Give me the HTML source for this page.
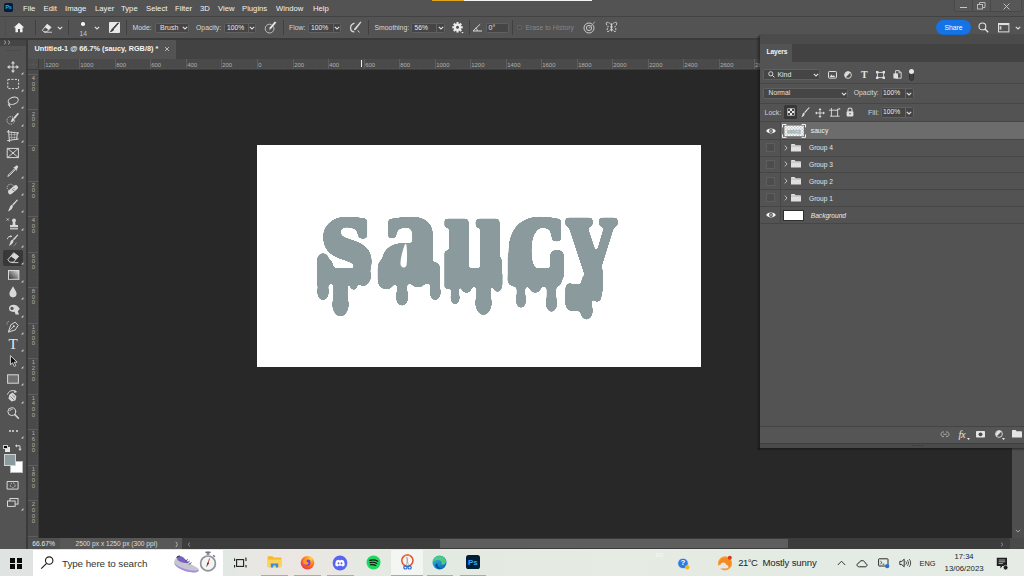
<!DOCTYPE html>
<html><head><meta charset="utf-8"><title>Untitled-1 @ 66.7% (saucy, RGB/8)</title>
<style>
*{box-sizing:border-box;margin:0;padding:0}
html,body{width:1024px;height:576px;overflow:hidden;background:#282828}
body{font-family:"Liberation Sans",sans-serif;position:relative}
.abs{position:absolute}
.t{position:absolute;white-space:nowrap}
.bx{position:absolute;background:#454545;border:1px solid #606060;border-radius:1.5px}
svg{overflow:visible}
</style></head><body>
<div class="abs" style="left:0px;top:0px;width:1024px;height:16px;background:#535353;"></div>
<div class="abs" style="left:0px;top:16px;width:1024px;height:1px;background:#434343;"></div>
<div class="abs" style="left:0px;top:17px;width:1024px;height:21px;background:#535353;"></div>
<div class="abs" style="left:0px;top:38px;width:1024px;height:2px;background:#3a3a3a;"></div>
<div class="abs" style="left:28px;top:40px;width:996px;height:19px;background:#424242;"></div>
<div class="abs" style="left:28px;top:40px;width:148px;height:19px;background:#535353;"></div>
<div class="abs" style="left:0px;top:40px;width:26px;height:509px;background:#535353;"></div>
<div class="abs" style="left:0px;top:40px;width:26px;height:6px;background:#454545;"></div>
<div class="abs" style="left:26px;top:40px;width:2px;height:509px;background:#3a3a3a;"></div>
<div class="abs" style="left:28px;top:59px;width:996px;height:11px;background:#4a4a4a;"></div>
<div class="abs" style="left:28px;top:70px;width:11px;height:468px;background:#4a4a4a;"></div>
<div class="abs" style="left:39px;top:70px;width:985px;height:468px;background:#282828;"></div>
<div class="abs" style="left:257px;top:145px;width:444px;height:222px;background:#ffffff;"></div>
<svg id="art" class="abs" style="left:257px;top:145px" width="444" height="222" viewBox="257 145 444 222">
<defs><filter id="goo" x="-5%" y="-5%" width="110%" height="110%" color-interpolation-filters="sRGB"><feGaussianBlur in="SourceGraphic" stdDeviation="1.5" result="b"/><feColorMatrix in="b" mode="matrix" values="0 0 0 0 0.545  0 0 0 0 0.604  0 0 0 0 0.612  0 0 0 14 -6.8"/></filter></defs>
<g fill="#8b9a9c" stroke="#8b9a9c" filter="url(#goo)">
<text y="281" font-family="'Liberation Serif',serif" font-weight="bold" font-size="131" stroke-width="5" stroke-linejoin="round"><tspan x="321.5" textLength="51" lengthAdjust="spacingAndGlyphs">s</tspan><tspan x="380" textLength="58" lengthAdjust="spacingAndGlyphs">a</tspan><tspan x="444.5" textLength="61" lengthAdjust="spacingAndGlyphs">u</tspan><tspan x="506.5" textLength="57" lengthAdjust="spacingAndGlyphs">c</tspan><tspan x="566" textLength="51" lengthAdjust="spacingAndGlyphs">y</tspan></text>
<g stroke="none">
<rect x="317.0" y="253.0" width="12.0" height="37.0" rx="6.0"/>
<rect x="317.8" y="270.0" width="10.4" height="25.3" rx="5.2"/><ellipse cx="323.0" cy="291.8" rx="6.0" ry="8.7"/>
<rect x="333.3" y="270.0" width="14.4" height="39.1" rx="7.2"/><ellipse cx="340.5" cy="304.2" rx="8.5" ry="12.3"/>
<rect x="350.0" y="270.0" width="7.5" height="20.0" rx="3.8"/>
<rect x="358.0" y="266.0" width="10.6" height="20.4" rx="5.3"/>
<rect x="322.0" y="268.0" width="49.0" height="16.0" rx="6.0"/>
<rect x="377.5" y="258.0" width="17.5" height="31.6" rx="8.8"/>
<rect x="396.9" y="270.0" width="10.4" height="30.3" rx="5.2"/><ellipse cx="402.1" cy="296.6" rx="6.5" ry="9.4"/>
<rect x="409.0" y="270.0" width="18.0" height="17.5" rx="9.0"/>
<rect x="430.5" y="262.0" width="9.5" height="33.4" rx="4.8"/><ellipse cx="435.2" cy="292.1" rx="5.8" ry="8.3"/>
<rect x="379.0" y="266.0" width="61.0" height="18.0" rx="6.0"/>
<rect x="402.0" y="250.0" width="12.0" height="18.0" rx="2.0"/>
<rect x="444.0" y="250.0" width="8.0" height="39.5" rx="4.0"/>
<rect x="451.3" y="270.0" width="7.7" height="30.4" rx="3.8"/><ellipse cx="455.1" cy="297.6" rx="4.8" ry="7.0"/>
<rect x="461.0" y="270.0" width="11.0" height="23.0" rx="5.5"/>
<rect x="476.3" y="270.0" width="14.4" height="37.6" rx="7.2"/><ellipse cx="483.5" cy="302.7" rx="8.5" ry="12.3"/>
<rect x="493.0" y="256.0" width="9.0" height="36.0" rx="4.5"/>
<rect x="445.0" y="268.0" width="56.0" height="19.0" rx="6.0"/>
<rect x="507.5" y="252.0" width="8.5" height="33.5" rx="4.2"/>
<rect x="516.5" y="270.0" width="8.9" height="33.3" rx="4.4"/><ellipse cx="521.0" cy="300.1" rx="5.4" ry="7.9"/>
<rect x="529.0" y="270.0" width="12.5" height="23.0" rx="6.2"/>
<rect x="546.5" y="270.0" width="9.9" height="36.8" rx="4.9"/><ellipse cx="551.5" cy="303.4" rx="5.9" ry="8.6"/>
<rect x="550.0" y="250.0" width="14.0" height="31.0" rx="5.0"/>
<rect x="509.0" y="268.0" width="53.0" height="19.0" rx="6.0"/>
<rect x="565.3" y="283.0" width="8.9" height="21.4" rx="4.5"/><ellipse cx="569.8" cy="301.4" rx="5.2" ry="7.6"/>
<rect x="581.3" y="275.0" width="10.4" height="39.3" rx="5.2"/><ellipse cx="586.5" cy="310.6" rx="6.5" ry="9.4"/>
<rect x="592.5" y="272.0" width="9.0" height="30.0" rx="4.5"/>
<rect x="566.0" y="284.0" width="36.0" height="15.0" rx="5.0"/>
<rect x="584.0" y="266.0" width="19.0" height="29.0" rx="5.0"/>
</g>
</g>
<path d="M404.8 244.6C403 250 400.3 258 400.5 264C400.7 268.4 406.2 268.8 406.7 264.4C407.2 258 407.2 250 406.5 245C406.3 243.8 405.2 243.6 404.8 244.6Z" fill="#ffffff"/>
<rect x="441.4" y="205" width="2.8" height="97" rx="1" fill="#ffffff"/>
<rect x="502.6" y="205" width="4.6" height="92" rx="1.5" fill="#ffffff"/>
</svg>
<div class="abs" style="left:4.2px;top:3.4px;width:9.2px;height:8.8px;background:#001e36;border-radius:1.8px"></div>
<div class="t " style="left:5.4px;top:4.4px;font-size:5.4px;line-height:7.4px;color:#31a8ff;font-weight:bold;letter-spacing:-0.2px">Ps</div>
<div class="t " style="left:23px;top:3.8px;font-size:7.7px;line-height:9.7px;color:#f2f2f2;">File</div>
<div class="t " style="left:43.6px;top:3.8px;font-size:7.7px;line-height:9.7px;color:#f2f2f2;">Edit</div>
<div class="t " style="left:65px;top:3.8px;font-size:7.7px;line-height:9.7px;color:#f2f2f2;">Image</div>
<div class="t " style="left:95px;top:3.8px;font-size:7.7px;line-height:9.7px;color:#f2f2f2;">Layer</div>
<div class="t " style="left:121px;top:3.8px;font-size:7.7px;line-height:9.7px;color:#f2f2f2;">Type</div>
<div class="t " style="left:146px;top:3.8px;font-size:7.7px;line-height:9.7px;color:#f2f2f2;">Select</div>
<div class="t " style="left:175px;top:3.8px;font-size:7.7px;line-height:9.7px;color:#f2f2f2;">Filter</div>
<div class="t " style="left:200px;top:3.8px;font-size:7.7px;line-height:9.7px;color:#f2f2f2;">3D</div>
<div class="t " style="left:218px;top:3.8px;font-size:7.7px;line-height:9.7px;color:#f2f2f2;">View</div>
<div class="t " style="left:242px;top:3.8px;font-size:7.7px;line-height:9.7px;color:#f2f2f2;">Plugins</div>
<div class="t " style="left:276px;top:3.8px;font-size:7.7px;line-height:9.7px;color:#f2f2f2;">Window</div>
<div class="t " style="left:313px;top:3.8px;font-size:7.7px;line-height:9.7px;color:#f2f2f2;">Help</div>
<div class="abs" style="left:432px;top:0px;width:32px;height:1.4px;background:#e0a418;"></div>
<div class="abs" style="left:464px;top:0px;width:128px;height:1.4px;background:#f2f2f2;"></div>
<div class="abs" style="left:953.5px;top:-1px;width:68.5px;height:13px;background:#575757;border:1px solid #484848;border-radius:0 0 2px 2px"></div>
<div class="abs" style="left:972px;top:0px;width:1px;height:12px;background:#484848;"></div>
<div class="abs" style="left:990px;top:0px;width:1px;height:12px;background:#484848;"></div>
<div class="abs" style="left:959.5px;top:7.2px;width:7px;height:1.3px;background:#c8c8c8;"></div>
<svg class="abs" style="left:977px;top:2.4px;" width="9" height="8" viewBox="0 0 9 8"><rect x="0.5" y="2.5" width="5" height="4.5" fill="none" stroke="#b8b8b8" stroke-width="1"/><path d="M2.5 2.5V0.5H8V5.5H5.5" fill="none" stroke="#b8b8b8" stroke-width="1"/></svg>
<svg class="abs" style="left:1003px;top:3px;" width="7" height="7" viewBox="0 0 7 7"><path d="M0.6 0.6L6.4 6.4M6.4 0.6L0.6 6.4" stroke="#cacaca" stroke-width="0.9"/></svg>
<div class="abs" style="left:4.5px;top:20px;width:1px;height:1px;background:#474747;"></div>
<div class="abs" style="left:4.5px;top:22px;width:1px;height:1px;background:#474747;"></div>
<div class="abs" style="left:4.5px;top:24px;width:1px;height:1px;background:#474747;"></div>
<div class="abs" style="left:4.5px;top:26px;width:1px;height:1px;background:#474747;"></div>
<div class="abs" style="left:4.5px;top:28px;width:1px;height:1px;background:#474747;"></div>
<div class="abs" style="left:4.5px;top:30px;width:1px;height:1px;background:#474747;"></div>
<div class="abs" style="left:4.5px;top:32px;width:1px;height:1px;background:#474747;"></div>
<div class="abs" style="left:4.5px;top:34px;width:1px;height:1px;background:#474747;"></div>
<svg class="abs" style="left:13px;top:22.2px;" width="12" height="11" viewBox="0 0 14 13"><path d="M7 1L0.8 6.6H2.8V12H5.8V8.4H8.2V12H11.2V6.6H13.2Z" fill="#f0f0f0"/></svg>
<div class="abs" style="left:35px;top:20px;width:1px;height:15px;background:#404040;"></div>
<svg class="abs" style="left:41px;top:23px;" width="11.4" height="10.2" viewBox="0 0 14 12.6"><path d="M7.6 1.6L12.4 5.4L7 11H3.6L1.6 9Z" fill="none" stroke="#e8e8e8" stroke-width="1.1" stroke-linejoin="round"/><path d="M7.6 1.6L12.4 5.4L9.4 8.6L4.6 4.8Z" fill="#e8e8e8"/><path d="M4 11.4H13.6" stroke="#e8e8e8" stroke-width="1"/></svg>
<svg class="abs" style="left:57px;top:26px;" width="6" height="4" viewBox="0 0 6 4"><path d="M0.8 0.8 L3 3 L5.2 0.8" fill="none" stroke="#dedede" stroke-width="1.1"/></svg>
<div class="abs" style="left:68px;top:20px;width:1px;height:15px;background:#404040;"></div>
<div class="abs" style="left:81.3px;top:22px;width:3.6px;height:3.6px;border-radius:50%;background:#f4f4f4"></div>
<div class="t " style="left:79.5px;top:29.5px;font-size:6.6px;line-height:8.6px;color:#c8c8c8;">14</div>
<svg class="abs" style="left:93.5px;top:26px;" width="6" height="4" viewBox="0 0 6 4"><path d="M0.8 0.8 L3 3 L5.2 0.8" fill="none" stroke="#dedede" stroke-width="1.1"/></svg>
<div class="abs" style="left:109px;top:22px;width:11px;height:11px;background:#e8e8e8;border-radius:1px"></div>
<svg class="abs" style="left:109px;top:22px;" width="11" height="11" viewBox="0 0 11 11"><path d="M9.6 1.2L5 6.6L4.2 6L8.8 0.9Z M3.8 6.4L4.7 7.2C4.4 8.6 3 9.6 1.4 9.6C2.6 8.8 2.4 7 3.8 6.4Z" fill="#3a3a3a" stroke="#3a3a3a" stroke-width="0.9" stroke-linejoin="round"/></svg>
<div class="abs" style="left:126px;top:20px;width:1px;height:15px;background:#404040;"></div>
<div class="t " style="left:132.5px;top:24.2px;font-size:6.9px;line-height:8.9px;color:#d8d8d8;">Mode:</div>
<div class="bx" style="left:154.8px;top:22.6px;width:34px;height:10.4px;"></div>
<div class="t " style="left:160px;top:23px;font-size:7px;line-height:9px;color:#e4e4e4;">Brush</div>
<svg class="abs" style="left:182px;top:26px;" width="6" height="4" viewBox="0 0 6 4"><path d="M0.8 0.8 L3 3 L5.2 0.8" fill="none" stroke="#dedede" stroke-width="1.1"/></svg>
<div class="t " style="left:196px;top:24.2px;font-size:6.85px;line-height:8.85px;color:#d8d8d8;">Opacity:</div>
<div class="bx" style="left:223.6px;top:22.6px;width:32.6px;height:10.4px;"></div>
<div class="t " style="left:227px;top:24.2px;font-size:6.7px;line-height:8.7px;color:#ececec;">100%</div>
<div class="abs" style="left:248px;top:23.4px;width:1px;height:8.8px;background:#606060;"></div>
<svg class="abs" style="left:249.4px;top:26px;" width="6" height="4" viewBox="0 0 6 4"><path d="M0.8 0.8 L3 3 L5.2 0.8" fill="none" stroke="#dedede" stroke-width="1.1"/></svg>
<svg class="abs" style="left:264px;top:21px;" width="13" height="13" viewBox="0 0 13 13"><circle cx="5.6" cy="7.6" r="4.4" fill="none" stroke="#c2c2c2" stroke-width="0.95"/><path d="M12.6 1.6L7.2 8L4.8 9.2L5.4 6.6L10.8 0.2Z" fill="#efefef" stroke="#535353" stroke-width="0.6"/></svg>
<div class="abs" style="left:283px;top:20px;width:1px;height:15px;background:#404040;"></div>
<div class="t " style="left:289px;top:24.2px;font-size:6.9px;line-height:8.9px;color:#d8d8d8;">Flow:</div>
<div class="bx" style="left:308px;top:22.6px;width:33px;height:10.4px;"></div>
<div class="t " style="left:311px;top:24.2px;font-size:6.7px;line-height:8.7px;color:#ececec;">100%</div>
<div class="abs" style="left:333.4px;top:23.4px;width:1px;height:8.8px;background:#606060;"></div>
<svg class="abs" style="left:334.4px;top:26px;" width="6" height="4" viewBox="0 0 6 4"><path d="M0.8 0.8 L3 3 L5.2 0.8" fill="none" stroke="#dedede" stroke-width="1.1"/></svg>
<svg class="abs" style="left:349px;top:21px;" width="14" height="13" viewBox="0 0 14 13"><path d="M5.5 2.2C2.8 3 1.4 5 1.6 7.4C1.8 9.4 3.2 10.8 5.4 11" fill="none" stroke="#dcdcdc" stroke-width="1.25"/><path d="M12.4 1.2L7.8 7.6C7.2 8.8 6 9.4 4.6 9.2C5.4 8.4 5 7.4 6.2 6.6L11.4 0.6Z" fill="#d8d8d8"/><path d="M8.8 9.4L10.4 11.4" stroke="#d8d8d8" stroke-width="1"/></svg>
<div class="abs" style="left:368px;top:20px;width:1px;height:15px;background:#404040;"></div>
<div class="t " style="left:374.5px;top:24.2px;font-size:6.85px;line-height:8.85px;color:#d8d8d8;">Smoothing:</div>
<div class="bx" style="left:411px;top:22.6px;width:34px;height:10.4px;"></div>
<div class="t " style="left:414.5px;top:24.2px;font-size:6.7px;line-height:8.7px;color:#ececec;">56%</div>
<div class="abs" style="left:435.6px;top:23.4px;width:1px;height:8.8px;background:#606060;"></div>
<svg class="abs" style="left:437.5px;top:26px;" width="6" height="4" viewBox="0 0 6 4"><path d="M0.8 0.8 L3 3 L5.2 0.8" fill="none" stroke="#dedede" stroke-width="1.1"/></svg>
<svg class="abs" style="left:451px;top:21px;" width="13" height="13" viewBox="0 0 13 13"><g transform="translate(6.5 6.3)"><rect x="-1.1" y="-5.2" width="2.2" height="2.6" transform="rotate(0)" fill="#ececec"/><rect x="-1.1" y="-5.2" width="2.2" height="2.6" transform="rotate(45)" fill="#ececec"/><rect x="-1.1" y="-5.2" width="2.2" height="2.6" transform="rotate(90)" fill="#ececec"/><rect x="-1.1" y="-5.2" width="2.2" height="2.6" transform="rotate(135)" fill="#ececec"/><rect x="-1.1" y="-5.2" width="2.2" height="2.6" transform="rotate(180)" fill="#ececec"/><rect x="-1.1" y="-5.2" width="2.2" height="2.6" transform="rotate(225)" fill="#ececec"/><rect x="-1.1" y="-5.2" width="2.2" height="2.6" transform="rotate(270)" fill="#ececec"/><rect x="-1.1" y="-5.2" width="2.2" height="2.6" transform="rotate(315)" fill="#ececec"/><circle r="3.5" fill="#ececec"/><circle r="1.5" fill="#535353"/></g><path d="M10.4 11L12.6 11L11.5 12.4Z" fill="#ececec"/></svg>
<div class="abs" style="left:469px;top:20px;width:1px;height:15px;background:#404040;"></div>
<svg class="abs" style="left:472px;top:23px;" width="11" height="9" viewBox="0 0 11 9"><path d="M10 8H1L8.2 1.2" fill="none" stroke="#d8d8d8" stroke-width="1"/><path d="M5.2 8C5.2 6.4 4.6 5.4 3.8 4.8" fill="none" stroke="#d8d8d8" stroke-width="0.9"/></svg>
<div class="bx" style="left:486px;top:22.6px;width:23px;height:10.4px;"></div>
<div class="t " style="left:488.5px;top:23.2px;font-size:7px;line-height:9px;color:#e8e8e8;">0°</div>
<div class="abs" style="left:512px;top:20px;width:1px;height:15px;background:#404040;"></div>
<div class="abs" style="left:517px;top:25px;width:5px;height:5px;border:0.8px solid #626262;border-radius:1px;background:#4e4e4e"></div>
<div class="t " style="left:525.5px;top:24.2px;font-size:6.8px;line-height:8.8px;color:#868686;">Erase to History</div>
<svg class="abs" style="left:583px;top:21px;" width="13" height="13" viewBox="0 0 13 13"><circle cx="6" cy="7" r="5" fill="none" stroke="#d8d8d8" stroke-width="0.9"/><circle cx="6" cy="7" r="2.6" fill="none" stroke="#d8d8d8" stroke-width="0.9"/><path d="M12.4 0.8L6.6 7.2L5.4 7.8L5.9 6.5L11.6 0.4Z" fill="#d8d8d8" stroke="#535353" stroke-width="0.5"/></svg>
<svg class="abs" style="left:605px;top:21px;" width="13" height="13" viewBox="0 0 13 13"><path d="M6 3.4C4.6 1.6 2.4 1 1 1.6C1.4 3.6 2 5 3.4 6C2 6.8 1.8 8.6 2.6 10.6C4 10.6 5.4 9.6 6 8Z M7 3.4C8.4 1.6 10.6 1 12 1.6C11.6 3.6 11 5 9.6 6C11 6.8 11.2 8.6 10.4 10.6C9 10.6 7.6 9.6 7 8Z" fill="none" stroke="#d8d8d8" stroke-width="0.9" stroke-linejoin="round" stroke-dasharray="2.2 0.8"/><path d="M6.5 2.4V10.4" stroke="#d8d8d8" stroke-width="0.9"/></svg>
<div class="abs" style="left:936px;top:20px;width:35px;height:15px;border-radius:8px;background:#1473e6"></div>
<div class="t " style="left:944.5px;top:23.5px;font-size:6.8px;line-height:8.8px;color:#ffffff;">Share</div>
<svg class="abs" style="left:978px;top:22px;" width="11" height="11" viewBox="0 0 11 11"><circle cx="4.4" cy="4.4" r="3.4" fill="none" stroke="#e6e6e6" stroke-width="1.1"/><path d="M7 7L10.2 10.2" stroke="#e6e6e6" stroke-width="1.3"/></svg>
<svg class="abs" style="left:998px;top:23px;" width="11.4" height="9.4" viewBox="0 0 11.4 9.4"><rect x="0.5" y="0.5" width="10.4" height="8.4" fill="none" stroke="#e0e0e0" stroke-width="1"/><rect x="0.5" y="0.5" width="10.4" height="1.6" fill="#e0e0e0"/><rect x="1.6" y="3.2" width="1.8" height="3.4" fill="#cfcfcf"/></svg>
<svg class="abs" style="left:1015px;top:26px;" width="6" height="4" viewBox="0 0 6 4"><path d="M0.8 0.8 L3 3 L5.2 0.8" fill="none" stroke="#e0e0e0" stroke-width="1.1"/></svg>
<div class="t " style="left:34.5px;top:44px;font-size:7.3px;line-height:9.3px;color:#f4f4f4;font-weight:bold">Untitled-1 @ 66.7% (saucy, RGB/8) *</div>
<svg class="abs" style="left:164px;top:46px;" width="6" height="6" viewBox="0 0 6 6"><path d="M1 1L5 5M5 1L1 5" stroke="#c4c4c4" stroke-width="0.9"/></svg>
<svg class="abs" style="left:2.6px;top:40.4px;" width="9" height="5" viewBox="0 0 9 5"><path d="M1 0.6L3 2.5L1 4.4M5 0.6L7 2.5L5 4.4" fill="none" stroke="#bdbdbd" stroke-width="0.8"/></svg>
<div class="abs" style="left:7px;top:50px;width:1px;height:1px;background:#444;"></div>
<div class="abs" style="left:9px;top:50px;width:1px;height:1px;background:#444;"></div>
<div class="abs" style="left:11px;top:50px;width:1px;height:1px;background:#444;"></div>
<div class="abs" style="left:13px;top:50px;width:1px;height:1px;background:#444;"></div>
<div class="abs" style="left:15px;top:50px;width:1px;height:1px;background:#444;"></div>
<div class="abs" style="left:17px;top:50px;width:1px;height:1px;background:#444;"></div>
<div class="abs" style="left:19px;top:50px;width:1px;height:1px;background:#444;"></div>
<div class="abs" style="left:28px;top:69px;width:996px;height:1px;background:#3c3c3c;"></div>
<div class="abs" style="left:38px;top:59px;width:1px;height:479px;background:#3c3c3c;"></div>
<div class="abs" style="left:39px;top:67.5px;width:985px;height:1.5px;background:repeating-linear-gradient(90deg,#585858 0,#585858 1px,rgba(0,0,0,0) 1px,rgba(0,0,0,0) 3.552px);background-position:1.33px 0"></div>
<div class="abs" style="left:36.5px;top:70px;width:1.5px;height:468px;background:repeating-linear-gradient(180deg,#585858 0,#585858 1px,rgba(0,0,0,0) 1px,rgba(0,0,0,0) 3.552px);background-position:0 0.41px"></div>
<div class="abs" style="left:44px;top:59px;width:1px;height:10px;background:#5e5e5e;"></div>
<div class="t " style="left:45.3px;top:62.4px;font-size:5.9px;line-height:7.9px;color:#b0b0b0;">1200</div>
<div class="abs" style="left:79px;top:59px;width:1px;height:10px;background:#5e5e5e;"></div>
<div class="t " style="left:80.3px;top:62.4px;font-size:5.9px;line-height:7.9px;color:#b0b0b0;">1000</div>
<div class="abs" style="left:115px;top:59px;width:1px;height:10px;background:#5e5e5e;"></div>
<div class="t " style="left:116.3px;top:62.4px;font-size:5.9px;line-height:7.9px;color:#b0b0b0;">800</div>
<div class="abs" style="left:150px;top:59px;width:1px;height:10px;background:#5e5e5e;"></div>
<div class="t " style="left:151.3px;top:62.4px;font-size:5.9px;line-height:7.9px;color:#b0b0b0;">600</div>
<div class="abs" style="left:186px;top:59px;width:1px;height:10px;background:#5e5e5e;"></div>
<div class="t " style="left:187.3px;top:62.4px;font-size:5.9px;line-height:7.9px;color:#b0b0b0;">400</div>
<div class="abs" style="left:221px;top:59px;width:1px;height:10px;background:#5e5e5e;"></div>
<div class="t " style="left:222.3px;top:62.4px;font-size:5.9px;line-height:7.9px;color:#b0b0b0;">200</div>
<div class="abs" style="left:257px;top:59px;width:1px;height:10px;background:#5e5e5e;"></div>
<div class="t " style="left:258.3px;top:62.4px;font-size:5.9px;line-height:7.9px;color:#b0b0b0;">0</div>
<div class="abs" style="left:293px;top:59px;width:1px;height:10px;background:#5e5e5e;"></div>
<div class="t " style="left:294.3px;top:62.4px;font-size:5.9px;line-height:7.9px;color:#b0b0b0;">200</div>
<div class="abs" style="left:328px;top:59px;width:1px;height:10px;background:#5e5e5e;"></div>
<div class="t " style="left:329.3px;top:62.4px;font-size:5.9px;line-height:7.9px;color:#b0b0b0;">400</div>
<div class="abs" style="left:364px;top:59px;width:1px;height:10px;background:#5e5e5e;"></div>
<div class="t " style="left:365.3px;top:62.4px;font-size:5.9px;line-height:7.9px;color:#b0b0b0;">600</div>
<div class="abs" style="left:399px;top:59px;width:1px;height:10px;background:#5e5e5e;"></div>
<div class="t " style="left:400.3px;top:62.4px;font-size:5.9px;line-height:7.9px;color:#b0b0b0;">800</div>
<div class="abs" style="left:435px;top:59px;width:1px;height:10px;background:#5e5e5e;"></div>
<div class="t " style="left:436.3px;top:62.4px;font-size:5.9px;line-height:7.9px;color:#b0b0b0;">1000</div>
<div class="abs" style="left:470px;top:59px;width:1px;height:10px;background:#5e5e5e;"></div>
<div class="t " style="left:471.3px;top:62.4px;font-size:5.9px;line-height:7.9px;color:#b0b0b0;">1200</div>
<div class="abs" style="left:506px;top:59px;width:1px;height:10px;background:#5e5e5e;"></div>
<div class="t " style="left:507.3px;top:62.4px;font-size:5.9px;line-height:7.9px;color:#b0b0b0;">1400</div>
<div class="abs" style="left:541px;top:59px;width:1px;height:10px;background:#5e5e5e;"></div>
<div class="t " style="left:542.3px;top:62.4px;font-size:5.9px;line-height:7.9px;color:#b0b0b0;">1600</div>
<div class="abs" style="left:577px;top:59px;width:1px;height:10px;background:#5e5e5e;"></div>
<div class="t " style="left:578.3px;top:62.4px;font-size:5.9px;line-height:7.9px;color:#b0b0b0;">1800</div>
<div class="abs" style="left:612px;top:59px;width:1px;height:10px;background:#5e5e5e;"></div>
<div class="t " style="left:613.3px;top:62.4px;font-size:5.9px;line-height:7.9px;color:#b0b0b0;">2000</div>
<div class="abs" style="left:648px;top:59px;width:1px;height:10px;background:#5e5e5e;"></div>
<div class="t " style="left:649.3px;top:62.4px;font-size:5.9px;line-height:7.9px;color:#b0b0b0;">2200</div>
<div class="abs" style="left:683px;top:59px;width:1px;height:10px;background:#5e5e5e;"></div>
<div class="t " style="left:684.3px;top:62.4px;font-size:5.9px;line-height:7.9px;color:#b0b0b0;">2400</div>
<div class="abs" style="left:719px;top:59px;width:1px;height:10px;background:#5e5e5e;"></div>
<div class="t " style="left:720.3px;top:62.4px;font-size:5.9px;line-height:7.9px;color:#b0b0b0;">2600</div>
<div class="abs" style="left:754px;top:59px;width:1px;height:10px;background:#5e5e5e;"></div>
<div class="t " style="left:755.3px;top:62.4px;font-size:5.9px;line-height:7.9px;color:#b0b0b0;">2800</div>
<div class="abs" style="left:790px;top:59px;width:1px;height:10px;background:#5e5e5e;"></div>
<div class="t " style="left:791.3px;top:62.4px;font-size:5.9px;line-height:7.9px;color:#b0b0b0;">3000</div>
<div class="abs" style="left:28px;top:74px;width:10px;height:1px;background:#5e5e5e;"></div>
<div class="t " style="left:31.8px;top:75.2px;font-size:5.9px;line-height:7.9px;color:#b0b0b0;">4</div>
<div class="t " style="left:31.8px;top:80.7px;font-size:5.9px;line-height:7.9px;color:#b0b0b0;">0</div>
<div class="t " style="left:31.8px;top:86.3px;font-size:5.9px;line-height:7.9px;color:#b0b0b0;">0</div>
<div class="abs" style="left:28px;top:109px;width:10px;height:1px;background:#5e5e5e;"></div>
<div class="t " style="left:31.8px;top:110.7px;font-size:5.9px;line-height:7.9px;color:#b0b0b0;">2</div>
<div class="t " style="left:31.8px;top:116.2px;font-size:5.9px;line-height:7.9px;color:#b0b0b0;">0</div>
<div class="t " style="left:31.8px;top:121.8px;font-size:5.9px;line-height:7.9px;color:#b0b0b0;">0</div>
<div class="abs" style="left:28px;top:145px;width:10px;height:1px;background:#5e5e5e;"></div>
<div class="t " style="left:31.8px;top:146.2px;font-size:5.9px;line-height:7.9px;color:#b0b0b0;">0</div>
<div class="abs" style="left:28px;top:181px;width:10px;height:1px;background:#5e5e5e;"></div>
<div class="t " style="left:31.8px;top:181.7px;font-size:5.9px;line-height:7.9px;color:#b0b0b0;">2</div>
<div class="t " style="left:31.8px;top:187.3px;font-size:5.9px;line-height:7.9px;color:#b0b0b0;">0</div>
<div class="t " style="left:31.8px;top:192.8px;font-size:5.9px;line-height:7.9px;color:#b0b0b0;">0</div>
<div class="abs" style="left:28px;top:216px;width:10px;height:1px;background:#5e5e5e;"></div>
<div class="t " style="left:31.8px;top:217.2px;font-size:5.9px;line-height:7.9px;color:#b0b0b0;">4</div>
<div class="t " style="left:31.8px;top:222.8px;font-size:5.9px;line-height:7.9px;color:#b0b0b0;">0</div>
<div class="t " style="left:31.8px;top:228.3px;font-size:5.9px;line-height:7.9px;color:#b0b0b0;">0</div>
<div class="abs" style="left:28px;top:252px;width:10px;height:1px;background:#5e5e5e;"></div>
<div class="t " style="left:31.8px;top:252.8px;font-size:5.9px;line-height:7.9px;color:#b0b0b0;">6</div>
<div class="t " style="left:31.8px;top:258.3px;font-size:5.9px;line-height:7.9px;color:#b0b0b0;">0</div>
<div class="t " style="left:31.8px;top:263.9px;font-size:5.9px;line-height:7.9px;color:#b0b0b0;">0</div>
<div class="abs" style="left:28px;top:287px;width:10px;height:1px;background:#5e5e5e;"></div>
<div class="t " style="left:31.8px;top:288.3px;font-size:5.9px;line-height:7.9px;color:#b0b0b0;">8</div>
<div class="t " style="left:31.8px;top:293.8px;font-size:5.9px;line-height:7.9px;color:#b0b0b0;">0</div>
<div class="t " style="left:31.8px;top:299.4px;font-size:5.9px;line-height:7.9px;color:#b0b0b0;">0</div>
<div class="abs" style="left:28px;top:323px;width:10px;height:1px;background:#5e5e5e;"></div>
<div class="t " style="left:31.8px;top:323.8px;font-size:5.9px;line-height:7.9px;color:#b0b0b0;">1</div>
<div class="t " style="left:31.8px;top:329.4px;font-size:5.9px;line-height:7.9px;color:#b0b0b0;">0</div>
<div class="t " style="left:31.8px;top:334.9px;font-size:5.9px;line-height:7.9px;color:#b0b0b0;">0</div>
<div class="t " style="left:31.8px;top:340.4px;font-size:5.9px;line-height:7.9px;color:#b0b0b0;">0</div>
<div class="abs" style="left:28px;top:358px;width:10px;height:1px;background:#5e5e5e;"></div>
<div class="t " style="left:31.8px;top:359.3px;font-size:5.9px;line-height:7.9px;color:#b0b0b0;">1</div>
<div class="t " style="left:31.8px;top:364.9px;font-size:5.9px;line-height:7.9px;color:#b0b0b0;">2</div>
<div class="t " style="left:31.8px;top:370.4px;font-size:5.9px;line-height:7.9px;color:#b0b0b0;">0</div>
<div class="t " style="left:31.8px;top:376.0px;font-size:5.9px;line-height:7.9px;color:#b0b0b0;">0</div>
<div class="abs" style="left:28px;top:394px;width:10px;height:1px;background:#5e5e5e;"></div>
<div class="t " style="left:31.8px;top:394.8px;font-size:5.9px;line-height:7.9px;color:#b0b0b0;">1</div>
<div class="t " style="left:31.8px;top:400.4px;font-size:5.9px;line-height:7.9px;color:#b0b0b0;">4</div>
<div class="t " style="left:31.8px;top:405.9px;font-size:5.9px;line-height:7.9px;color:#b0b0b0;">0</div>
<div class="t " style="left:31.8px;top:411.5px;font-size:5.9px;line-height:7.9px;color:#b0b0b0;">0</div>
<div class="abs" style="left:28px;top:429px;width:10px;height:1px;background:#5e5e5e;"></div>
<div class="t " style="left:31.8px;top:430.4px;font-size:5.9px;line-height:7.9px;color:#b0b0b0;">1</div>
<div class="t " style="left:31.8px;top:435.9px;font-size:5.9px;line-height:7.9px;color:#b0b0b0;">6</div>
<div class="t " style="left:31.8px;top:441.5px;font-size:5.9px;line-height:7.9px;color:#b0b0b0;">0</div>
<div class="t " style="left:31.8px;top:447.0px;font-size:5.9px;line-height:7.9px;color:#b0b0b0;">0</div>
<div class="abs" style="left:28px;top:465px;width:10px;height:1px;background:#5e5e5e;"></div>
<div class="t " style="left:31.8px;top:465.9px;font-size:5.9px;line-height:7.9px;color:#b0b0b0;">1</div>
<div class="t " style="left:31.8px;top:471.4px;font-size:5.9px;line-height:7.9px;color:#b0b0b0;">8</div>
<div class="t " style="left:31.8px;top:477.0px;font-size:5.9px;line-height:7.9px;color:#b0b0b0;">0</div>
<div class="t " style="left:31.8px;top:482.5px;font-size:5.9px;line-height:7.9px;color:#b0b0b0;">0</div>
<div class="abs" style="left:28px;top:500px;width:10px;height:1px;background:#5e5e5e;"></div>
<div class="t " style="left:31.8px;top:501.4px;font-size:5.9px;line-height:7.9px;color:#b0b0b0;">2</div>
<div class="t " style="left:31.8px;top:507.0px;font-size:5.9px;line-height:7.9px;color:#b0b0b0;">0</div>
<div class="t " style="left:31.8px;top:512.5px;font-size:5.9px;line-height:7.9px;color:#b0b0b0;">0</div>
<div class="t " style="left:31.8px;top:518.1px;font-size:5.9px;line-height:7.9px;color:#b0b0b0;">0</div>
<div class="abs" style="left:28px;top:536px;width:10px;height:1px;background:#5e5e5e;"></div>
<div class="abs" style="left:361px;top:60px;width:1px;height:7px;background:#f0f0f0;"></div>
<div class="abs" style="left:28px;top:59px;width:10px;height:10px;background:#4e4e4e;"></div>
<div class="abs" style="left:30px;top:64px;width:1px;height:1px;background:#5a5a5a;"></div>
<div class="abs" style="left:32px;top:64px;width:1px;height:1px;background:#5a5a5a;"></div>
<div class="abs" style="left:34px;top:64px;width:1px;height:1px;background:#5a5a5a;"></div>
<div class="abs" style="left:36px;top:64px;width:1px;height:1px;background:#5a5a5a;"></div>
<div class="abs" style="left:33px;top:61px;width:1px;height:1px;background:#5a5a5a;"></div>
<div class="abs" style="left:33px;top:63px;width:1px;height:1px;background:#5a5a5a;"></div>
<div class="abs" style="left:33px;top:65px;width:1px;height:1px;background:#5a5a5a;"></div>
<div class="abs" style="left:33px;top:67px;width:1px;height:1px;background:#5a5a5a;"></div>
<div class="abs" style="left:3px;top:250px;width:20px;height:15.5px;background:#383838;border-radius:2px"></div>
<svg class="abs" style="left:6.300000000000001px;top:60.0px;" width="14" height="14" viewBox="-7 -7 14 14"><path d="M0 -4.4V4.4M-4.4 0H4.4" fill="none" stroke="#d8d8d8" stroke-width="1" stroke-linejoin="round" stroke-linecap="round" stroke-width="0.85"/><path d="M0 -6L2 -3.4H-2ZM0 6L2 3.4H-2ZM-6 0L-3.4 2V-2ZM6 0L3.4 2V-2Z" fill="#d8d8d8"/></svg>
<svg class="abs" style="left:20.5px;top:71.6px;" width="2.4" height="2.4" viewBox="0 0 2.4 2.4"><path d="M2.4 0V2.4H0Z" fill="#cccccc"/></svg>
<svg class="abs" style="left:6.300000000000001px;top:77.2px;" width="14" height="14" viewBox="-7 -7 14 14"><rect x="-5.2" y="-4.6" width="10.8" height="9.2" fill="none" stroke="#d8d8d8" stroke-width="1" stroke-dasharray="2.2 1.3"/></svg>
<svg class="abs" style="left:20.5px;top:88.8px;" width="2.4" height="2.4" viewBox="0 0 2.4 2.4"><path d="M2.4 0V2.4H0Z" fill="#cccccc"/></svg>
<svg class="abs" style="left:6.300000000000001px;top:94.5px;" width="14" height="14" viewBox="-7 -7 14 14"><ellipse cx="0.6" cy="-1.2" rx="5.2" ry="3.4" transform="rotate(-18)" fill="none" stroke="#d8d8d8" stroke-width="1" stroke-linejoin="round" stroke-linecap="round"/><path d="M-4 1.4C-5.4 2.4 -4.4 4 -3 3.4C-2.4 3 -3 2 -3.8 2.4C-4 3.6 -3.6 4.6 -2.6 5.4" fill="none" stroke="#d8d8d8" stroke-width="1" stroke-linejoin="round" stroke-linecap="round" stroke-width="0.8"/></svg>
<svg class="abs" style="left:20.5px;top:106.1px;" width="2.4" height="2.4" viewBox="0 0 2.4 2.4"><path d="M2.4 0V2.4H0Z" fill="#cccccc"/></svg>
<svg class="abs" style="left:6.300000000000001px;top:112.3px;" width="14" height="14" viewBox="-7 -7 14 14"><circle cx="-2.2" cy="1.4" r="3.8" fill="none" stroke="#d8d8d8" stroke-width="0.8" stroke-dasharray="1.4 0.9"/><path d="M6 -5.2L2 -0.2L0.4 -1.6L4.8 -6.2Z" fill="#d8d8d8"/><path d="M-0.2 -1.2L1.4 0.2C1 2.2 -0.8 3.2 -2.6 2.8C-1.2 2 -1.6 -0.4 -0.2 -1.2Z" fill="#d8d8d8"/></svg>
<svg class="abs" style="left:20.5px;top:123.89999999999999px;" width="2.4" height="2.4" viewBox="0 0 2.4 2.4"><path d="M2.4 0V2.4H0Z" fill="#cccccc"/></svg>
<svg class="abs" style="left:6.300000000000001px;top:128.8px;" width="14" height="14" viewBox="-7 -7 14 14"><path d="M-4.4 -5.6L-3.6 5.6M4.4 -3.2L3.6 3.6M-5.8 -4.2L5.6 -3M-5.4 4.6L5.4 3" fill="none" stroke="#d8d8d8" stroke-width="1" stroke-linejoin="round" stroke-linecap="round" stroke-width="0.9"/><path d="M-1.6 -4.6L-1.2 4M1.4 -4.2L1.2 3.6M-4 -1.4H4M-4 1.4H4" stroke="#d8d8d8" stroke-width="0.5" fill="none"/></svg>
<svg class="abs" style="left:20.5px;top:140.4px;" width="2.4" height="2.4" viewBox="0 0 2.4 2.4"><path d="M2.4 0V2.4H0Z" fill="#cccccc"/></svg>
<svg class="abs" style="left:6.300000000000001px;top:146.3px;" width="14" height="14" viewBox="-7 -7 14 14"><rect x="-5.4" y="-4.6" width="10.8" height="9.2" fill="none" stroke="#d8d8d8" stroke-width="1" stroke-linejoin="round" stroke-linecap="round"/><path d="M-5.4 -4.6L5.4 4.6M5.4 -4.6L-5.4 4.6" fill="none" stroke="#d8d8d8" stroke-width="1" stroke-linejoin="round" stroke-linecap="round" stroke-width="0.9"/></svg>
<svg class="abs" style="left:6.300000000000001px;top:164.0px;" width="14" height="14" viewBox="-7 -7 14 14"><path d="M1.2 -1.8L-4.4 3.8L-5.2 5.4L-3.6 4.6L2 -1Z" fill="none" stroke="#d8d8d8" stroke-width="1" stroke-linejoin="round" stroke-linecap="round" stroke-width="0.9"/><path d="M0.4 -3.4L3.6 -0.2L4.4 -1L3.6 -1.8C5.4 -3 5.4 -4.6 4.6 -5.2C3.8 -5.8 2.4 -5.4 1.8 -3.8L1.2 -4.2Z" fill="#d8d8d8"/></svg>
<svg class="abs" style="left:20.5px;top:175.6px;" width="2.4" height="2.4" viewBox="0 0 2.4 2.4"><path d="M2.4 0V2.4H0Z" fill="#cccccc"/></svg>
<svg class="abs" style="left:6.300000000000001px;top:181.5px;" width="14" height="14" viewBox="-7 -7 14 14"><circle cx="-2.4" cy="-1.4" r="3.4" fill="none" stroke="#d8d8d8" stroke-width="0.8" stroke-dasharray="1.3 0.9"/><rect x="-5.8" y="-1.6" width="11.6" height="4.6" rx="2.3" transform="rotate(-40 0 0.7)" fill="#d8d8d8"/><circle cx="-0.4" cy="0.8" r="0.5" fill="#535353"/><circle cx="1" cy="-0.4" r="0.5" fill="#535353"/><circle cx="0.8" cy="1.6" r="0.5" fill="#535353"/></svg>
<svg class="abs" style="left:20.5px;top:193.1px;" width="2.4" height="2.4" viewBox="0 0 2.4 2.4"><path d="M2.4 0V2.4H0Z" fill="#cccccc"/></svg>
<svg class="abs" style="left:6.300000000000001px;top:198.8px;" width="14" height="14" viewBox="-7 -7 14 14"><path d="M5 -6L0.4 -0.6L-0.8 -1.6L4 -6.4Z" fill="#d8d8d8"/><path d="M-1.2 -1.2L0 -0.2C-0.2 2 -2 4.8 -5.2 5.4C-3.6 3.8 -3.2 -0.6 -1.2 -1.2Z" fill="#d8d8d8"/></svg>
<svg class="abs" style="left:20.5px;top:210.4px;" width="2.4" height="2.4" viewBox="0 0 2.4 2.4"><path d="M2.4 0V2.4H0Z" fill="#cccccc"/></svg>
<svg class="abs" style="left:6.300000000000001px;top:216.6px;" width="14" height="14" viewBox="-7 -7 14 14"><circle cx="1" cy="-3.6" r="2" fill="#d8d8d8"/><path d="M0 -2.4H2L2.6 1H5V3.2H-3V1H-0.6Z" fill="#d8d8d8"/><rect x="-3" y="4.2" width="8" height="1.2" fill="#d8d8d8"/><path d="M-6.4 -5.6L-4.2 -3.4M-4.2 -5.6L-6.4 -3.4" stroke="#d8d8d8" stroke-width="0.8"/></svg>
<svg class="abs" style="left:20.5px;top:228.2px;" width="2.4" height="2.4" viewBox="0 0 2.4 2.4"><path d="M2.4 0V2.4H0Z" fill="#cccccc"/></svg>
<svg class="abs" style="left:6.300000000000001px;top:233.6px;" width="14" height="14" viewBox="-7 -7 14 14"><path d="M5.4 -6L1 -0.8L-0.2 -1.8L4.4 -6.4Z" fill="#d8d8d8"/><path d="M-0.6 -1.4L0.6 -0.4C0.4 1.8 -1.4 4.4 -4.2 5C-2.8 3.4 -2.6 -0.8 -0.6 -1.4Z" fill="#d8d8d8"/><path d="M-5.6 -2.2C-5.2 -4.2 -3.4 -5.2 -1.6 -4.6" fill="none" stroke="#d8d8d8" stroke-width="1" stroke-linejoin="round" stroke-linecap="round" stroke-width="0.8"/><path d="M-2.4 -6L-0.8 -4.4L-2.8 -3.4Z" fill="#d8d8d8"/><path d="M3.2 1.6C2.8 3.2 1.8 4.4 0.6 5" fill="none" stroke="#d8d8d8" stroke-width="0.7" stroke-dasharray="1 0.8"/></svg>
<svg class="abs" style="left:20.5px;top:245.2px;" width="2.4" height="2.4" viewBox="0 0 2.4 2.4"><path d="M2.4 0V2.4H0Z" fill="#cccccc"/></svg>
<svg class="abs" style="left:6.300000000000001px;top:250.8px;" width="14" height="14" viewBox="-7 -7 14 14"><path d="M1 -5L5.6 -1.6L0.4 4.2H-3L-5 2.2Z" fill="none" stroke="#d8d8d8" stroke-width="1" stroke-linejoin="round" stroke-linecap="round" stroke-width="1"/><path d="M1 -5L5.6 -1.6L2.6 1.8L-2 -1.6Z" fill="#d8d8d8"/><path d="M-1.4 4.6H5.4" stroke="#d8d8d8" stroke-width="0.9"/></svg>
<svg class="abs" style="left:20.5px;top:262.40000000000003px;" width="2.4" height="2.4" viewBox="0 0 2.4 2.4"><path d="M2.4 0V2.4H0Z" fill="#cccccc"/></svg>
<svg class="abs" style="left:7.6px;top:270px" width="11.4" height="9.8" viewBox="0 0 11.4 9.8"><defs><linearGradient id="gr" x1="0" y1="1" x2="1" y2="0"><stop offset="0" stop-color="#2a2a2a"/><stop offset="1" stop-color="#e0e0e0"/></linearGradient></defs><rect x="0.5" y="0.5" width="10.4" height="8.8" fill="url(#gr)" stroke="#d8d8d8" stroke-width="1"/></svg>
<svg class="abs" style="left:20.5px;top:279.6px;" width="2.4" height="2.4" viewBox="0 0 2.4 2.4"><path d="M2.4 0V2.4H0Z" fill="#cccccc"/></svg>
<svg class="abs" style="left:6.300000000000001px;top:285.3px;" width="14" height="14" viewBox="-7 -7 14 14"><path d="M0 -5.8C1.4 -3 3.6 -0.6 3.6 1.8C3.6 4 2 5.4 0 5.4C-2 5.4 -3.6 4 -3.6 1.8C-3.6 -0.6 -1.4 -3 0 -5.8Z" fill="#d8d8d8"/></svg>
<svg class="abs" style="left:20.5px;top:296.90000000000003px;" width="2.4" height="2.4" viewBox="0 0 2.4 2.4"><path d="M2.4 0V2.4H0Z" fill="#cccccc"/></svg>
<svg class="abs" style="left:6.6px;top:303.0px;" width="14" height="14" viewBox="-7 -7 14 14"><path d="M-5 -1.4C-5 -4 -2.8 -5.2 -0.4 -5.2C2 -5.2 3.4 -4.2 4.2 -3L5.8 -1.2L3.8 1.2L5 4.6H1.6L0.6 1.8C-2.6 2.4 -5 1 -5 -1.4Z" fill="#d8d8d8"/><circle cx="-2" cy="-1.6" r="1.6" fill="#535353"/></svg>
<svg class="abs" style="left:20.5px;top:314.6px;" width="2.4" height="2.4" viewBox="0 0 2.4 2.4"><path d="M2.4 0V2.4H0Z" fill="#cccccc"/></svg>
<svg class="abs" style="left:6.300000000000001px;top:320.0px;" width="14" height="14" viewBox="-7 -7 14 14"><path d="M-4.6 4.8L-2.2 -2.2L2.2 -4.8L5.2 -1.6L2.4 2.6Z" fill="none" stroke="#d8d8d8" stroke-width="1" stroke-linejoin="round" stroke-linecap="round" stroke-width="0.9"/><path d="M-4.6 4.8L0.4 -0.4" stroke="#d8d8d8" stroke-width="0.8"/><circle cx="0.8" cy="-0.8" r="1" fill="#d8d8d8"/><path d="M-5.8 -2.4C-6.4 -4 -5.6 -5.6 -4 -5.6" fill="none" stroke="#d8d8d8" stroke-width="0.6" stroke-dasharray="1 0.7"/></svg>
<svg class="abs" style="left:20.5px;top:331.6px;" width="2.4" height="2.4" viewBox="0 0 2.4 2.4"><path d="M2.4 0V2.4H0Z" fill="#cccccc"/></svg>
<div class="t" style="left:8.6px;top:336.8px;font-family:'Liberation Serif',serif;font-size:15px;line-height:15px;color:#e4e4e4">T</div>
<svg class="abs" style="left:20.5px;top:348.6px;" width="2.4" height="2.4" viewBox="0 0 2.4 2.4"><path d="M2.4 0V2.4H0Z" fill="#cccccc"/></svg>
<svg class="abs" style="left:6.300000000000001px;top:354.3px;" width="14" height="14" viewBox="-7 -7 14 14"><path d="M-2.6 -5.4V3.8L-0.4 1.8L1.2 5.4L2.8 4.7L1.2 1.2H4.2Z" fill="#111" stroke="#e0e0e0" stroke-width="0.9" stroke-linejoin="round"/></svg>
<svg class="abs" style="left:20.5px;top:365.90000000000003px;" width="2.4" height="2.4" viewBox="0 0 2.4 2.4"><path d="M2.4 0V2.4H0Z" fill="#cccccc"/></svg>
<svg class="abs" style="left:6.300000000000001px;top:371.6px;" width="14" height="14" viewBox="-7 -7 14 14"><rect x="-5.4" y="-4.2" width="10.8" height="8.4" fill="#707070" stroke="#d8d8d8" stroke-width="1"/></svg>
<svg class="abs" style="left:20.5px;top:383.20000000000005px;" width="2.4" height="2.4" viewBox="0 0 2.4 2.4"><path d="M2.4 0V2.4H0Z" fill="#cccccc"/></svg>
<svg class="abs" style="left:6.300000000000001px;top:389.0px;" width="14" height="14" viewBox="-7 -7 14 14"><path d="M-3.6 -1.2L-0.4 -3.4L3.4 0.2L2.6 4.2L-1.4 5.6L-4.6 2.6Z" fill="#d8d8d8"/><path d="M-5.4 -1.8C-4.6 -5 -0.6 -6.6 2.6 -4.6" fill="none" stroke="#d8d8d8" stroke-width="1" stroke-linejoin="round" stroke-linecap="round" stroke-width="0.8"/><path d="M1.4 -6.2L4.2 -4L1.2 -3Z" fill="#d8d8d8"/><path d="M-2.4 0.6L0.8 3.8M-0.6 -1L2 1.6" stroke="#535353" stroke-width="0.7"/></svg>
<svg class="abs" style="left:20.5px;top:400.6px;" width="2.4" height="2.4" viewBox="0 0 2.4 2.4"><path d="M2.4 0V2.4H0Z" fill="#cccccc"/></svg>
<svg class="abs" style="left:6.300000000000001px;top:406.4px;" width="14" height="14" viewBox="-7 -7 14 14"><circle cx="-1.2" cy="-1.4" r="3.9" fill="none" stroke="#d8d8d8" stroke-width="1" stroke-linejoin="round" stroke-linecap="round" stroke-width="1"/><path d="M1.8 1.6L5.4 5.2" stroke="#d8d8d8" stroke-width="1.5" stroke-linecap="round"/><path d="M-3.2 -2.2C-2.8 -3.4 -1.8 -3.8 -0.8 -3.8" fill="none" stroke="#d8d8d8" stroke-width="1" stroke-linejoin="round" stroke-linecap="round" stroke-width="0.6"/></svg>
<div class="abs" style="left:8.6px;top:430px;width:2px;height:2px;background:#dcdcdc;border-radius:50%"></div>
<div class="abs" style="left:12.4px;top:430px;width:2px;height:2px;background:#dcdcdc;border-radius:50%"></div>
<div class="abs" style="left:16.2px;top:430px;width:2px;height:2px;background:#dcdcdc;border-radius:50%"></div>
<svg class="abs" style="left:20.5px;top:435.6px;" width="2.4" height="2.4" viewBox="0 0 2.4 2.4"><path d="M2.4 0V2.4H0Z" fill="#cccccc"/></svg>
<div class="abs" style="left:5.4px;top:447px;width:5px;height:4.6px;background:#e8e8e8;"></div>
<div class="abs" style="left:3.2px;top:444.6px;width:5px;height:4.6px;background:#0a0a0a;border:0.6px solid #cfcfcf"></div>
<svg class="abs" style="left:14.6px;top:443.6px;" width="7" height="7.4" viewBox="0 0 7 7.4"><path d="M1.4 1.8H5V5" fill="none" stroke="#d8d8d8" stroke-width="1" stroke-linejoin="round" stroke-linecap="round" stroke-width="0.9"/><path d="M0 1.8L2 0.2V3.4ZM5 7L3.4 4.8H6.6Z" fill="#d8d8d8"/></svg>
<div class="abs" style="left:10px;top:461px;width:12.6px;height:12px;background:#ffffff;border:0.5px solid #bbb"></div>
<div class="abs" style="left:3.8px;top:454px;width:12.4px;height:12.4px;background:#8b9a9c;border:1px solid #cdd2d2"></div>
<svg class="abs" style="left:7.3px;top:481.2px;" width="11.6" height="8.6" viewBox="0 0 11.6 8.6"><rect x="0.5" y="0.5" width="10.6" height="7.6" fill="none" stroke="#d8d8d8" stroke-width="1" stroke-linejoin="round" stroke-linecap="round"/><circle cx="5.8" cy="4.3" r="2.4" fill="none" stroke="#d8d8d8" stroke-width="0.8" stroke-dasharray="1.6 1"/></svg>
<svg class="abs" style="left:7.3px;top:498px;" width="11.6" height="9" viewBox="0 0 11.6 9"><rect x="3" y="0.5" width="8" height="5.6" fill="#535353" stroke="#d8d8d8" stroke-width="1"/><rect x="0.5" y="3" width="7.6" height="5.4" fill="#535353" stroke="#d8d8d8" stroke-width="1"/></svg>
<svg class="abs" style="left:20.5px;top:508.1px;" width="2.4" height="2.4" viewBox="0 0 2.4 2.4"><path d="M2.4 0V2.4H0Z" fill="#cccccc"/></svg>
<div class="abs" style="left:28px;top:538px;width:996px;height:11px;background:#3c3c3c;"></div>
<div class="abs" style="left:28px;top:538px;width:32px;height:11px;background:#505050;"></div>
<div class="abs" style="left:60px;top:538px;width:122px;height:11px;background:#575757;"></div>
<div class="t " style="left:32.2px;top:539.5px;font-size:6.7px;line-height:8.7px;color:#e6e6e6;">66.67%</div>
<div class="t " style="left:75.6px;top:539.5px;font-size:6.6px;line-height:8.6px;color:#dedede;">2500 px x 1250 px (300 ppi)</div>
<svg class="abs" style="left:175px;top:540.5px;" width="4" height="7" viewBox="0 0 4 7"><path d="M0.8 0.8C2.6 2.4 2.6 4.6 0.8 6.2" fill="none" stroke="#c8c8c8" stroke-width="0.8"/></svg>
<svg class="abs" style="left:187px;top:541.5px;" width="4" height="5" viewBox="0 0 4 5"><path d="M3 0.6L1 2.5L3 4.4" fill="none" stroke="#a0a0a0" stroke-width="0.8"/></svg>
<div class="abs" style="left:440px;top:539px;width:348px;height:9px;background:#5e5e5e;"></div>
<svg class="abs" style="left:1000px;top:541.5px;" width="4" height="5" viewBox="0 0 4 5"><path d="M1 0.6L3 2.5L1 4.4" fill="none" stroke="#a0a0a0" stroke-width="0.8"/></svg>
<div class="abs" style="left:1010px;top:538px;width:14px;height:11px;background:#4a4a4a;"></div>
<div class="abs" style="left:1012px;top:448px;width:12px;height:90px;background:#4e4e4e;"></div>
<svg class="abs" style="left:1014.5px;top:529px;" width="6" height="4" viewBox="0 0 6 4"><path d="M0.8 0.8L3 3L5.2 0.8" fill="none" stroke="#b8b8b8" stroke-width="0.8"/></svg>
<div class="abs" style="left:756px;top:36px;width:4px;height:414px;background:linear-gradient(90deg,rgba(0,0,0,0),rgba(15,15,15,.5))"></div>
<div class="abs" style="left:759px;top:33.5px;width:265px;height:2px;background:linear-gradient(180deg,rgba(0,0,0,0),rgba(20,20,20,.45))"></div>
<div class="abs" style="left:758px;top:448px;width:266px;height:2.5px;background:linear-gradient(180deg,rgba(15,15,15,.5),rgba(0,0,0,0))"></div>
<div class="abs" style="left:760px;top:35px;width:264px;height:413px;background:#535353;border-radius:3px 0 0 0"></div>
<div class="abs" style="left:760px;top:35px;width:264px;height:9px;background:#4b4b4b;border-radius:3px 0 0 0"></div>
<div class="abs" style="left:760px;top:44px;width:264px;height:18px;background:#424242;"></div>
<div class="abs" style="left:760px;top:44px;width:32px;height:18.5px;background:#535353;"></div>
<div class="t " style="left:766.6px;top:48.4px;font-size:6.7px;line-height:8.7px;color:#f4f4f4;font-weight:bold;letter-spacing:-0.15px">Layers</div>
<div class="bx" style="left:763px;top:69px;width:57px;height:10.5px;"></div>
<svg class="abs" style="left:768px;top:71px;" width="7" height="7" viewBox="0 0 7 7"><circle cx="2.8" cy="2.8" r="2.1" fill="none" stroke="#e0e0e0" stroke-width="0.9"/><path d="M4.4 4.4L6.4 6.4" stroke="#e0e0e0" stroke-width="1"/></svg>
<div class="t " style="left:777.4px;top:69.8px;font-size:7px;line-height:9px;color:#e4e4e4;">Kind</div>
<svg class="abs" style="left:812.5px;top:72.5px;" width="6" height="4" viewBox="0 0 6 4"><path d="M0.8 0.8 L3 3 L5.2 0.8" fill="none" stroke="#dedede" stroke-width="1.1"/></svg>
<svg class="abs" style="left:828px;top:70.5px;" width="9" height="8" viewBox="0 0 9 8"><rect x="0.5" y="0.5" width="8" height="6.6" rx="0.8" fill="none" stroke="#dedede" stroke-width="1"/><path d="M1.6 6L3.4 3.6L4.6 5L5.6 4.2L7.4 6Z" fill="#dedede"/></svg>
<svg class="abs" style="left:844px;top:70.5px;" width="8" height="8" viewBox="0 0 8 8"><circle cx="4" cy="4" r="3.4" fill="none" stroke="#dedede" stroke-width="0.9"/><path d="M1.6 6.4A3.4 3.4 0 0 1 6.4 1.6Z" fill="#dedede"/></svg>
<div class="t" style="left:861px;top:69px;font-family:'Liberation Serif',serif;font-weight:bold;font-size:10px;line-height:11px;color:#e4e4e4">T</div>
<svg class="abs" style="left:876px;top:70.5px;" width="9" height="8" viewBox="0 0 9 8"><rect x="1.4" y="1.4" width="6.2" height="5.2" fill="none" stroke="#dedede" stroke-width="0.9"/><rect x="0" y="0" width="2.4" height="2.4" fill="#dedede"/><rect x="6.6" y="0" width="2.4" height="2.4" fill="#dedede"/><rect x="0" y="5.6" width="2.4" height="2.4" fill="#dedede"/><rect x="6.6" y="5.6" width="2.4" height="2.4" fill="#dedede"/></svg>
<svg class="abs" style="left:892.5px;top:70px;" width="9" height="9" viewBox="0 0 9 9"><path d="M2.6 0.6H6.2L8.2 2.6V8.2H2.6Z" fill="none" stroke="#dedede" stroke-width="0.9"/><rect x="0.4" y="3.4" width="4.6" height="5" fill="#dedede"/><path d="M6 0.6V2.8H8.2" fill="none" stroke="#dedede" stroke-width="0.8"/></svg>
<div class="abs" style="left:909px;top:69px;width:5.4px;height:11.6px;border-radius:2.7px;background:#3e3e3e;border:0.5px solid #333"></div>
<div class="abs" style="left:909px;top:68.8px;width:5.4px;height:5.4px;border-radius:50%;background:#e8e8e8"></div>
<div class="abs" style="left:760px;top:83px;width:264px;height:1px;background:#464646;"></div>
<div class="bx" style="left:763px;top:88px;width:85px;height:10.5px;"></div>
<div class="t " style="left:768.6px;top:89.4px;font-size:6.7px;line-height:8.7px;color:#e4e4e4;">Normal</div>
<svg class="abs" style="left:840.5px;top:91.5px;" width="6" height="4" viewBox="0 0 6 4"><path d="M0.8 0.8 L3 3 L5.2 0.8" fill="none" stroke="#dedede" stroke-width="1.1"/></svg>
<div class="t " style="left:853.8px;top:89.4px;font-size:6.8px;line-height:8.8px;color:#d8d8d8;">Opacity:</div>
<div class="bx" style="left:880.5px;top:88px;width:33px;height:10.5px;"></div>
<div class="t " style="left:883px;top:89.4px;font-size:6.7px;line-height:8.7px;color:#ececec;">100%</div>
<div class="abs" style="left:904.5px;top:88.5px;width:1px;height:9.5px;background:#666;"></div>
<svg class="abs" style="left:906px;top:91.5px;" width="6" height="4" viewBox="0 0 6 4"><path d="M0.8 0.8 L3 3 L5.2 0.8" fill="none" stroke="#dedede" stroke-width="1.1"/></svg>
<div class="abs" style="left:760px;top:102.5px;width:264px;height:1px;background:#464646;"></div>
<div class="t " style="left:764.5px;top:108px;font-size:7px;line-height:9px;color:#d0d0d0;">Lock:</div>
<div class="abs" style="left:784px;top:105px;width:13px;height:14px;background:#383838;border-radius:1.5px"></div>
<svg class="abs" style="left:786.6px;top:108px;" width="8" height="8" viewBox="0 0 8 8"><rect x="0.4" y="0.4" width="7.2" height="7.2" fill="#efefef"/><rect x="0.9" y="0.9" width="2.1" height="2.1" fill="#444"/><rect x="5" y="0.9" width="2.1" height="2.1" fill="#444"/><rect x="2.95" y="2.95" width="2.1" height="2.1" fill="#444"/><rect x="0.9" y="5" width="2.1" height="2.1" fill="#444"/><rect x="5" y="5" width="2.1" height="2.1" fill="#444"/></svg>
<svg class="abs" style="left:800.5px;top:106.5px;" width="10" height="11" viewBox="0 0 10 11"><path d="M8.8 0.6L4.2 6L3.2 5.2L7.8 0.2Z" fill="#dedede"/><path d="M2.8 5.6L3.8 6.6C3.6 8.4 2.2 10 0.4 10.2C1.4 9 1.4 6.2 2.8 5.6Z" fill="#dedede"/></svg>
<svg class="abs" style="left:814.5px;top:107.5px;" width="10" height="10" viewBox="0 0 10 10"><path d="M5 1V9M1 5H9" stroke="#dedede" stroke-width="0.9"/><path d="M5 0L6.5 1.9H3.5ZM5 10L6.5 8.1H3.5ZM0 5L1.9 6.5V3.5ZM10 5L8.1 6.5V3.5Z" fill="#dedede"/></svg>
<svg class="abs" style="left:829px;top:107.5px;" width="11" height="10" viewBox="0 0 11 10"><path d="M2.4 0V8.2M0 2.2H8.6M8.6 0.8V8.2M1 8.2H10.6" stroke="#dedede" stroke-width="0.9" fill="none"/><path d="M8.6 2.2L10.6 0.6M9.4 0.4H10.8V1.8" stroke="#dedede" stroke-width="0.7" fill="none"/></svg>
<svg class="abs" style="left:845.5px;top:107px;" width="8" height="10" viewBox="0 0 8 10"><rect x="0.6" y="4.2" width="6.8" height="5.2" rx="0.8" fill="#dedede"/><path d="M2 4.4V2.8C2 0.4 6 0.4 6 2.8V4.4" fill="none" stroke="#dedede" stroke-width="1.1"/><circle cx="4" cy="6.8" r="0.8" fill="#535353"/></svg>
<div class="t " style="left:868px;top:108px;font-size:7px;line-height:9px;color:#d0d0d0;">Fill:</div>
<div class="bx" style="left:880.5px;top:107.2px;width:33px;height:10.5px;"></div>
<div class="t " style="left:883px;top:108px;font-size:6.7px;line-height:8.7px;color:#ececec;">100%</div>
<div class="abs" style="left:904.5px;top:107.7px;width:1px;height:9.5px;background:#666;"></div>
<svg class="abs" style="left:906px;top:110.7px;" width="6" height="4" viewBox="0 0 6 4"><path d="M0.8 0.8 L3 3 L5.2 0.8" fill="none" stroke="#dedede" stroke-width="1.1"/></svg>
<div class="abs" style="left:760px;top:121px;width:264px;height:1px;background:#464646;"></div>
<div class="abs" style="left:781px;top:122px;width:243px;height:17px;background:#6c6c6c;"></div>
<div class="abs" style="left:780px;top:122px;width:1px;height:101px;background:#464646;"></div>
<div class="abs" style="left:760px;top:139px;width:264px;height:1px;background:#464646;"></div>
<div class="abs" style="left:760px;top:156px;width:264px;height:1px;background:#464646;"></div>
<div class="abs" style="left:760px;top:172px;width:264px;height:1px;background:#464646;"></div>
<div class="abs" style="left:760px;top:189px;width:264px;height:1px;background:#464646;"></div>
<div class="abs" style="left:760px;top:206px;width:264px;height:1px;background:#464646;"></div>
<div class="abs" style="left:760px;top:223px;width:264px;height:1px;background:#464646;"></div>
<svg class="abs" style="left:766px;top:128.2px;" width="10" height="6" viewBox="0 0 10 6"><path d="M0.2 3C2 -0.2 8 -0.2 9.8 3C8 6.2 2 6.2 0.2 3Z" fill="#f4f4f4"/><circle cx="5" cy="3" r="1.9" fill="#4a4a4a"/><circle cx="5" cy="3" r="0.75" fill="#f4f4f4"/></svg>
<svg class="abs" style="left:766px;top:212px;" width="10" height="6" viewBox="0 0 10 6"><path d="M0.2 3C2 -0.2 8 -0.2 9.8 3C8 6.2 2 6.2 0.2 3Z" fill="#f4f4f4"/><circle cx="5" cy="3" r="1.9" fill="#4a4a4a"/><circle cx="5" cy="3" r="0.75" fill="#f4f4f4"/></svg>
<div class="abs" style="left:765.5px;top:143.0px;width:9px;height:9px;background:#4c4c4c;border:0.6px solid #5e5e5e"></div>
<svg class="abs" style="left:783.6px;top:144.6px;" width="4" height="6" viewBox="0 0 4 6"><path d="M0.8 0.6L3 3L0.8 5.4" fill="none" stroke="#d8d8d8" stroke-width="0.8"/></svg>
<svg class="abs" style="left:791px;top:143.7px;" width="10" height="7.6" viewBox="0 0 10 7.6"><path d="M0 0.8C0 0.4 0.3 0.1 0.7 0.1H3.6L4.6 1.2H9.3C9.7 1.2 10 1.5 10 1.9V7.5H0Z" fill="#e0e0e0"/><path d="M0 2.1H10" stroke="#9a9a9a" stroke-width="0.5"/></svg>
<div class="t " style="left:809px;top:144.2px;font-size:6.6px;line-height:8.6px;color:#e6e6e6;">Group 4</div>
<div class="abs" style="left:765.5px;top:159.7px;width:9px;height:9px;background:#4c4c4c;border:0.6px solid #5e5e5e"></div>
<svg class="abs" style="left:783.6px;top:161.29999999999998px;" width="4" height="6" viewBox="0 0 4 6"><path d="M0.8 0.6L3 3L0.8 5.4" fill="none" stroke="#d8d8d8" stroke-width="0.8"/></svg>
<svg class="abs" style="left:791px;top:160.39999999999998px;" width="10" height="7.6" viewBox="0 0 10 7.6"><path d="M0 0.8C0 0.4 0.3 0.1 0.7 0.1H3.6L4.6 1.2H9.3C9.7 1.2 10 1.5 10 1.9V7.5H0Z" fill="#e0e0e0"/><path d="M0 2.1H10" stroke="#9a9a9a" stroke-width="0.5"/></svg>
<div class="t " style="left:809px;top:160.89999999999998px;font-size:6.6px;line-height:8.6px;color:#e6e6e6;">Group 3</div>
<div class="abs" style="left:765.5px;top:176.5px;width:9px;height:9px;background:#4c4c4c;border:0.6px solid #5e5e5e"></div>
<svg class="abs" style="left:783.6px;top:178.1px;" width="4" height="6" viewBox="0 0 4 6"><path d="M0.8 0.6L3 3L0.8 5.4" fill="none" stroke="#d8d8d8" stroke-width="0.8"/></svg>
<svg class="abs" style="left:791px;top:177.2px;" width="10" height="7.6" viewBox="0 0 10 7.6"><path d="M0 0.8C0 0.4 0.3 0.1 0.7 0.1H3.6L4.6 1.2H9.3C9.7 1.2 10 1.5 10 1.9V7.5H0Z" fill="#e0e0e0"/><path d="M0 2.1H10" stroke="#9a9a9a" stroke-width="0.5"/></svg>
<div class="t " style="left:809px;top:177.7px;font-size:6.6px;line-height:8.6px;color:#e6e6e6;">Group 2</div>
<div class="abs" style="left:765.5px;top:193.3px;width:9px;height:9px;background:#4c4c4c;border:0.6px solid #5e5e5e"></div>
<svg class="abs" style="left:783.6px;top:194.9px;" width="4" height="6" viewBox="0 0 4 6"><path d="M0.8 0.6L3 3L0.8 5.4" fill="none" stroke="#d8d8d8" stroke-width="0.8"/></svg>
<svg class="abs" style="left:791px;top:194.0px;" width="10" height="7.6" viewBox="0 0 10 7.6"><path d="M0 0.8C0 0.4 0.3 0.1 0.7 0.1H3.6L4.6 1.2H9.3C9.7 1.2 10 1.5 10 1.9V7.5H0Z" fill="#e0e0e0"/><path d="M0 2.1H10" stroke="#9a9a9a" stroke-width="0.5"/></svg>
<div class="t " style="left:809px;top:194.5px;font-size:6.6px;line-height:8.6px;color:#e6e6e6;">Group 1</div>
<svg class="abs" style="left:782px;top:124px;" width="24" height="14" viewBox="0 0 24 14"><defs><pattern id="ck" width="3" height="3" patternUnits="userSpaceOnUse"><rect width="3" height="3" fill="#fff"/><rect width="1.5" height="1.5" fill="#ccc"/><rect x="1.5" y="1.5" width="1.5" height="1.5" fill="#ccc"/></pattern></defs><rect x="2.4" y="1.6" width="19.4" height="10.6" fill="url(#ck)"/><text x="5.2" y="8.8" font-family="Liberation Serif,serif" font-weight="bold" font-size="6.4" fill="#9fb4bc" stroke="#9fb4bc" stroke-width="0.4" textLength="13.6" lengthAdjust="spacingAndGlyphs">saucy</text><rect x="5" y="8" width="14" height="1.8" fill="#a8bac0" opacity=".6"/><path d="M0.5 3.4V0.5H4.4M19.6 0.5H23.5V3.4M23.5 10.4V13.4H19.6M4.4 13.4H0.5V10.4" fill="none" stroke="#f2f2f2" stroke-width="1"/></svg>
<div class="t " style="left:810.8px;top:127px;font-size:6.7px;line-height:8.7px;color:#f0f0f0;">saucy</div>
<div class="abs" style="left:783.3px;top:209.6px;width:21px;height:11px;background:#ffffff;border:0.6px solid #2e2e2e"></div>
<div class="t " style="left:810.8px;top:211.6px;font-size:6.6px;line-height:8.6px;color:#ececec;font-style:italic">Background</div>
<div class="abs" style="left:760px;top:426px;width:264px;height:1px;background:#444;"></div>
<div class="abs" style="left:760px;top:427px;width:264px;height:15.5px;background:#555555;"></div>
<div class="abs" style="left:760px;top:442.5px;width:264px;height:1px;background:#3e3e3e;"></div>
<div class="abs" style="left:760px;top:443.5px;width:264px;height:4.5px;background:#4a4a4a;"></div>
<div class="abs" style="left:912px;top:445px;width:2px;height:1px;background:#3c3c3c;"></div>
<div class="abs" style="left:915px;top:445px;width:2px;height:1px;background:#3c3c3c;"></div>
<div class="abs" style="left:918px;top:445px;width:2px;height:1px;background:#3c3c3c;"></div>
<div class="abs" style="left:921px;top:445px;width:2px;height:1px;background:#3c3c3c;"></div>
<svg class="abs" style="left:939.5px;top:430.5px;" width="10" height="7" viewBox="0 0 10 7"><path d="M4 1H3C0.4 1 0.4 5.6 3 5.6H4M6 1H7C9.6 1 9.6 5.6 7 5.6H6M3.2 3.3H6.8" fill="none" stroke="#b4b4b4" stroke-width="0.9"/></svg>
<div class="t" style="left:958.6px;top:428.6px;font-family:'Liberation Serif',serif;font-style:italic;font-size:10.4px;line-height:11px;color:#e6e6e6;letter-spacing:-0.4px">fx</div>
<svg class="abs" style="left:966.6px;top:438px;" width="3" height="2.2" viewBox="0 0 3 2.2"><path d="M0 0H3L1.5 2.2Z" fill="#e0e0e0"/></svg>
<svg class="abs" style="left:976px;top:430.6px;" width="9" height="7" viewBox="0 0 9 7"><rect x="0" y="0" width="9" height="6.6" rx="0.8" fill="#e4e4e4"/><circle cx="4.5" cy="3.3" r="1.9" fill="#4a4a4a"/></svg>
<svg class="abs" style="left:995px;top:430px;" width="8" height="8" viewBox="0 0 8 8"><circle cx="4" cy="4" r="3.4" fill="none" stroke="#e0e0e0" stroke-width="0.9"/><path d="M1.6 6.4A3.4 3.4 0 0 1 6.4 1.6Z" fill="#e0e0e0"/></svg>
<svg class="abs" style="left:1002.4px;top:438px;" width="3" height="2.2" viewBox="0 0 3 2.2"><path d="M0 0H3L1.5 2.2Z" fill="#e0e0e0"/></svg>
<svg class="abs" style="left:1012px;top:430.4px;" width="10" height="7.6" viewBox="0 0 10 7.6"><path d="M0 0.8C0 0.4 0.3 0.1 0.7 0.1H3.6L4.6 1.2H9.3C9.7 1.2 10 1.5 10 1.9V7.5H0Z" fill="#e4e4e4"/></svg>
<div class="abs" style="left:0;top:549px;width:1024px;height:27px;background:linear-gradient(90deg,#dfe3e1 0,#e2e8e3 22%,#ece6e2 27%,#e3eae2 40%,#e6ebe3 60%,#e4ebe4 80%,#e6ebe6 100%)"></div>
<div class="abs" style="left:33px;top:549.5px;width:189.5px;height:26.5px;background:#ffffff;"></div>
<div class="abs" style="left:10.4px;top:557.6px;width:5px;height:5px;background:#0a0a0a;"></div>
<div class="abs" style="left:16.5px;top:557.6px;width:5px;height:5px;background:#0a0a0a;"></div>
<div class="abs" style="left:10.4px;top:563.7px;width:5px;height:5px;background:#0a0a0a;"></div>
<div class="abs" style="left:16.5px;top:563.7px;width:5px;height:5px;background:#0a0a0a;"></div>
<svg class="abs" style="left:39px;top:555px;" width="16" height="16" viewBox="0 0 16 16"><circle cx="10.2" cy="5.6" r="3.7" fill="none" stroke="#1a1a1a" stroke-width="1.1"/><path d="M7.6 8.4L2.2 13.6" stroke="#1a1a1a" stroke-width="1.2"/></svg>
<div class="t " style="left:62px;top:558.3px;font-size:9.9px;line-height:11.9px;color:#333333;letter-spacing:-0.1px">Type here to search</div>
<svg class="abs" style="left:173px;top:554px;" width="27" height="20" viewBox="0 0 27 20"><path d="M4.4 3.2C6 1.6 8.8 2 10.4 3.6C12.8 6 16 9.4 20 11.4C23 12.8 25.6 13.6 25.8 16C25.8 17.6 24 18.4 21 18.4C15 18.4 10 16.6 5.6 14C2.8 12.4 0.8 10 1.2 7.4C1.6 5.6 3 4.4 4.4 3.2Z" fill="#c6c6d0"/><path d="M4.4 3.2C6 1.6 8.8 2 10.4 3.6C12 5.2 13.6 7 15.6 8.6C12.4 9.8 8 8.8 5.2 6.6C4.2 5.6 4 4.2 4.4 3.2Z" fill="#7a5fc0"/><path d="M1.2 8.8C4.4 12.6 12 16 20 16.6C23 16.8 25 16.4 25.8 15.8C25.8 17.6 24 18.4 21 18.4C15 18.4 10 16.6 5.6 14C3.4 12.6 1.4 10.8 1.2 8.8Z" fill="#a78ce0"/><path d="M12 7.4L15 5.4M13.8 9L16.8 7M15.8 10.4L18.6 8.6" stroke="#5a4a9a" stroke-width="0.9"/><path d="M3.6 3.8C4.6 2.4 6 2 7 2.2" stroke="#2e3a5a" stroke-width="1.2" fill="none"/></svg>
<svg class="abs" style="left:199px;top:551px;" width="18" height="22" viewBox="0 0 18 22"><rect x="7.6" y="1" width="2.8" height="3" fill="#8a8f98"/><rect x="6.4" y="0.4" width="5.2" height="1.6" rx="0.6" fill="#70757e"/><path d="M14.2 4.2L15.8 5.8" stroke="#70757e" stroke-width="1.4"/><circle cx="9" cy="12.4" r="7.4" fill="#f4f4f2" stroke="#8d929b" stroke-width="1.7"/><path d="M9 12.4L10.6 7.4" stroke="#c0392b" stroke-width="0.9"/><path d="M9 12.4L7.6 15.4" stroke="#333" stroke-width="0.9"/><circle cx="9" cy="12.4" r="0.9" fill="#333"/></svg>
<svg class="abs" style="left:233.5px;top:556.5px;" width="13" height="12" viewBox="0 0 13 12"><rect x="2.6" y="2.6" width="7" height="6.8" fill="none" stroke="#1e1e1e" stroke-width="1.1"/><path d="M0.6 1.6V4M0.6 8V10.4M12 1.6V4M12 8V10.4M11.8 0.4V1.6" stroke="#1e1e1e" stroke-width="1.1"/></svg>
<div class="abs" style="left:390.5px;top:549.5px;width:32px;height:26.5px;background:rgba(255,255,255,.55);"></div>
<div class="abs" style="left:261px;top:574.6px;width:26.5px;height:1.4px;background:#eba41c;"></div>
<div class="abs" style="left:294px;top:574.6px;width:26.5px;height:1.4px;background:#eba41c;"></div>
<div class="abs" style="left:327px;top:574.6px;width:26.5px;height:1.4px;background:#eba41c;"></div>
<div class="abs" style="left:390.5px;top:574.6px;width:32.0px;height:1.4px;background:#eba41c;"></div>
<div class="abs" style="left:426.5px;top:574.6px;width:26.5px;height:1.4px;background:#eba41c;"></div>
<div class="abs" style="left:459.5px;top:574.6px;width:26.5px;height:1.4px;background:#eba41c;"></div>
<svg class="abs" style="left:266.5px;top:555px;" width="15" height="14" viewBox="0 0 15 14"><path d="M0.6 2.2C0.6 1.6 1 1.2 1.6 1.2H5.4L6.8 2.6H13.4C14 2.6 14.4 3 14.4 3.6V11.6H0.6Z" fill="#f7b928"/><path d="M0.6 4.6H14.4V11.4C14.4 12 14 12.4 13.4 12.4H1.6C1 12.4 0.6 12 0.6 11.4Z" fill="#fbd25e"/><path d="M3.8 8.4H11.2V12.4H8.8V10.6H6.2V12.4H3.8Z" fill="#3b8de0"/></svg>
<svg class="abs" style="left:299.5px;top:555px;" width="15" height="15" viewBox="0 0 15 15"><defs><radialGradient id="ff" cx="0.7" cy="0.2" r="1"><stop offset="0" stop-color="#ffd23a"/><stop offset="0.45" stop-color="#ff7a1a"/><stop offset="1" stop-color="#e31c5f"/></radialGradient></defs><circle cx="7.5" cy="7.8" r="6.8" fill="url(#ff)"/><circle cx="7.2" cy="7.6" r="3.3" fill="#7b3fe0"/><path d="M3.4 5.4C4.6 3.6 7 3.4 8.6 4.4C7.2 4.4 6.4 5.2 6.6 6.2C6.8 7.2 8.4 7 8.6 8C8.8 9.4 6.4 10.6 4.4 9.2C3.2 8.4 2.8 6.6 3.4 5.4Z" fill="#ff9a1e"/><path d="M9.6 1.4C11 2.2 12.6 3.6 13 5.2C12.4 4.6 11.8 4.4 11.4 4.4C11 3.2 10.4 2.2 9.6 1.4Z" fill="#ffd23a"/></svg>
<svg class="abs" style="left:332px;top:554.6px;" width="16" height="16" viewBox="0 0 16 16"><circle cx="8" cy="8" r="7.4" fill="#5865f2"/><path d="M4.4 5.6C5.4 5 6.2 4.8 6.8 4.8L7 5.2C7.6 5.1 8.4 5.1 9 5.2L9.2 4.8C9.8 4.8 10.6 5 11.6 5.6C12.4 7 12.8 8.8 12.6 10.4C11.8 11 11 11.4 10.2 11.4L9.8 10.6C10 10.5 10.4 10.4 10.6 10.2C9 11 7 11 5.4 10.2C5.6 10.4 6 10.5 6.2 10.6L5.8 11.4C5 11.4 4.2 11 3.4 10.4C3.2 8.8 3.6 7 4.4 5.6Z" fill="#fff"/><ellipse cx="6.5" cy="8.3" rx="0.95" ry="1.1" fill="#5865f2"/><ellipse cx="9.5" cy="8.3" rx="0.95" ry="1.1" fill="#5865f2"/></svg>
<svg class="abs" style="left:366px;top:555px;" width="15" height="15" viewBox="0 0 15 15"><circle cx="7.5" cy="7.5" r="7" fill="#1ed760"/><path d="M3.6 5.4C6.4 4.6 9.4 4.8 11.8 6.2M4 7.6C6.4 7 8.8 7.2 10.8 8.4M4.4 9.8C6.4 9.4 8.2 9.6 9.8 10.4" fill="none" stroke="#111" stroke-width="1.15" stroke-linecap="round"/></svg>
<svg class="abs" style="left:398.5px;top:554.4px;" width="16" height="17" viewBox="0 0 16 17"><circle cx="8.4" cy="6.6" r="5.6" fill="none" stroke="#e8502a" stroke-width="1.5"/><path d="M5 2.4C6.6 1 9.6 0.8 11.4 1.8" stroke="#f07a3a" stroke-width="1.2" fill="none"/><path d="M8.8 3.2L7.4 11.6M7.4 3.2L9.6 11.6" stroke="#f4f4f4" stroke-width="1.2"/><path d="M8.8 3.2L7.4 11.6M7.4 3.2L9.6 11.6" stroke="#7a7a7a" stroke-width="0.5"/><circle cx="6.4" cy="13.4" r="1.6" fill="none" stroke="#2a66c8" stroke-width="1.2"/><circle cx="10.6" cy="13.4" r="1.6" fill="none" stroke="#2a66c8" stroke-width="1.2"/></svg>
<svg class="abs" style="left:432px;top:555px;" width="15" height="15" viewBox="0 0 15 15"><defs><linearGradient id="eg" x1="0" y1="0" x2="1" y2="1"><stop offset="0" stop-color="#35c1b0"/><stop offset="0.5" stop-color="#1c8fd8"/><stop offset="1" stop-color="#0c59a4"/></linearGradient></defs><circle cx="7.5" cy="7.5" r="7" fill="url(#eg)"/><path d="M1 7C1.6 3.6 4.4 1.2 7.8 1.2C11.4 1.2 14 3.8 14 6.6C14 8.6 12.6 9.8 11 9.8C9.6 9.8 9 9.2 9.4 8.4C9.8 7.6 9.6 6 7.8 5.4C5.4 4.6 2.4 5.6 1 7Z" fill="#5ad46a" opacity=".85"/><path d="M5.4 8C5 10.6 7 13 10 13.2C8 14.4 4.6 13.6 3.4 11.2C2.8 9.8 3.8 8.4 5.4 8Z" fill="#0b4f9a"/></svg>
<div class="abs" style="left:465.6px;top:555.4px;width:14px;height:13.6px;background:#001e36;border-radius:2.6px"></div>
<div class="t " style="left:468px;top:558px;font-size:8px;line-height:10px;color:#31a8ff;font-weight:bold;letter-spacing:-0.2px">Ps</div>
<div class="t " style="left:655.5px;top:552.4px;font-size:5.6px;line-height:7.6px;color:#f8f8f8;">EN</div>
<svg class="abs" style="left:676.5px;top:557px;" width="13" height="13" viewBox="0 0 13 13"><circle cx="6" cy="6.4" r="5.2" fill="#2c7be0"/><circle cx="6" cy="6.4" r="5.2" fill="none" stroke="#dfeaf8" stroke-width="0.7"/><circle cx="10.2" cy="10.2" r="2.2" fill="#f0b429"/></svg>
<div class="t " style="left:680.4px;top:558.4px;font-size:8px;line-height:10px;color:#ffffff;font-weight:bold">?</div>
<svg class="abs" style="left:716px;top:554.5px;" width="18" height="17" viewBox="0 0 18 17"><circle cx="9" cy="8.4" r="6.6" fill="#f58a1f"/><circle cx="9" cy="8.4" r="6.6" fill="none" stroke="#f7a43c" stroke-width="1"/><path d="M4.4 13.4C3 13.4 2.4 12.4 2.4 11.6C2.4 10.6 3.2 9.8 4.4 9.8C4.8 8.4 6 7.6 7.4 7.6C9 7.6 10.2 8.6 10.4 10C11.6 10 12.4 10.8 12.4 11.8C12.4 12.8 11.6 13.4 10.6 13.4Z" fill="#e4e8ee"/><circle cx="13.8" cy="2.8" r="2" fill="#e0361e"/></svg>
<div class="t " style="left:738.2px;top:557.4px;font-size:9.5px;line-height:11.5px;color:#1e1e1e;letter-spacing:-0.5px">21°C</div>
<div class="t " style="left:762.4px;top:557.4px;font-size:9.6px;line-height:11.6px;color:#1e1e1e;letter-spacing:-0.15px">Mostly sunny</div>
<svg class="abs" style="left:836.5px;top:559.5px;" width="9" height="6" viewBox="0 0 9 6"><path d="M0.8 5L4.5 1.2L8.2 5" fill="none" stroke="#222" stroke-width="0.9"/></svg>
<svg class="abs" style="left:856px;top:558.5px;" width="12" height="9" viewBox="0 0 12 9"><path d="M3.2 7.8C1.8 7.8 1 6.9 1 5.9C1 4.9 1.8 4.1 2.9 4.1C3.3 2.6 4.6 1.6 6.1 1.6C7.8 1.6 9.1 2.8 9.3 4.3C10.3 4.4 11 5.2 11 6.1C11 7.1 10.2 7.8 9.2 7.8Z" fill="none" stroke="#222" stroke-width="0.95"/></svg>
<svg class="abs" style="left:877.5px;top:557.5px;" width="12" height="11" viewBox="0 0 12 11"><rect x="0.6" y="0.8" width="9.4" height="7.2" rx="0.6" fill="none" stroke="#222" stroke-width="0.95"/><path d="M2.4 3.2L4 4.6L2.4 6" fill="none" stroke="#222" stroke-width="0.8"/><path d="M4.6 6.2H6.4" stroke="#222" stroke-width="0.8"/><circle cx="9.2" cy="8.2" r="2.1" fill="#2a6fd6"/></svg>
<svg class="abs" style="left:898.5px;top:558px;" width="13" height="10" viewBox="0 0 13 10"><path d="M0.8 3.4H2.8L5.2 1.2V8.8L2.8 6.6H0.8Z" fill="none" stroke="#222" stroke-width="0.9" stroke-linejoin="round"/><path d="M6.8 3.4C7.6 4.2 7.6 5.8 6.8 6.6M8.4 2.2C9.8 3.6 9.8 6.4 8.4 7.8M10 1C12.2 3 12.2 7 10 9" fill="none" stroke="#222" stroke-width="0.8"/></svg>
<div class="t " style="left:919.5px;top:558.6px;font-size:7.4px;line-height:9.4px;color:#1e1e1e;">ENG</div>
<div class="t " style="left:954.6px;top:551.8px;font-size:7.6px;line-height:9.6px;color:#1e1e1e;">17:34</div>
<div class="t " style="left:944.6px;top:564.2px;font-size:7.8px;line-height:9.8px;color:#1e1e1e;">13/06/2023</div>
<svg class="abs" style="left:996px;top:556.5px;" width="12" height="13" viewBox="0 0 12 13"><path d="M0.8 0.8H11V9H6.4L4.4 11.4V9H0.8Z" fill="#1e1e1e"/><path d="M2.6 3H9.2M2.6 4.8H9.2M2.6 6.6H7" stroke="#e6ebe6" stroke-width="0.7"/><circle cx="9.6" cy="10.6" r="2.3" fill="#1e1e1e" stroke="#e6ebe6" stroke-width="0.6"/></svg>
</body></html>
